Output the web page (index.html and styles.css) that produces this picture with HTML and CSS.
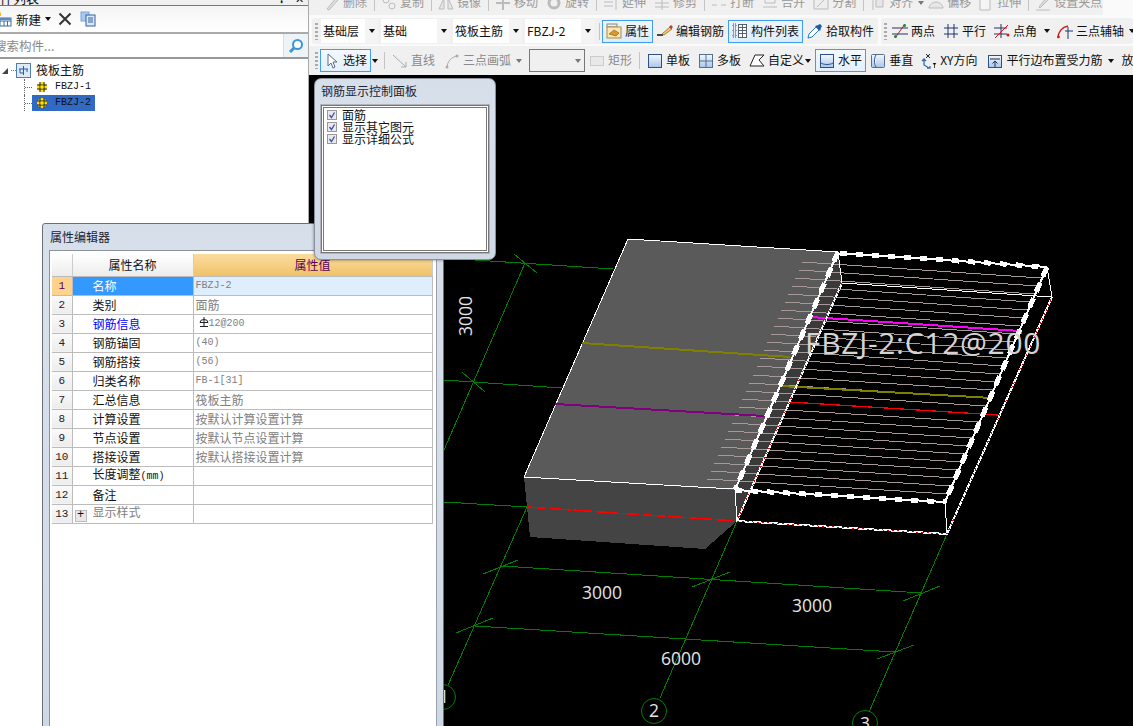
FILE: index.html
```html
<!DOCTYPE html>
<html lang="zh">
<head>
<meta charset="utf-8">
<title>钢筋显示控制面板</title>
<link rel="stylesheet" href="styles.css">
</head>
<body>
<div class="app">
  <aside class="side">
    <div class="side-title"><span class="side-title-text">构件列表</span><span class="side-title-btns"><span>✢</span><span>✕</span></span></div>
    <div class="side-tools">
      <svg class="ic-new" viewBox="0 0 16 16"><path d="M-2 1l2 2 2-2v4h-4z" fill="#f0c020"/><rect x="1" y="7" width="11" height="8" fill="#fff" stroke="#3a6ea5"/><path d="M1 10h11M5 10v5M8.500 10v5" stroke="#3a6ea5"/><rect x="1" y="7" width="11" height="2" fill="#5a8ac0"/></svg>
      <span class="side-new">新建</span><i class="caret caret-dark"></i>
      <svg class="ic-x" viewBox="0 0 14 14"><path d="M1.500 1.500l11 11M12.500 1.500l-11 11" stroke="#333" stroke-width="2"/></svg>
      <svg class="ic-copy" viewBox="0 0 16 16"><rect x="1" y="1" width="8" height="9" fill="#a8c8ee" stroke="#7fa6d6"/><rect x="6" y="4" width="9" height="11" fill="#dce9f8" stroke="#2f5f9f"/><path d="M8 7h5M8 9h5M8 11h5" stroke="#2f5f9f"/></svg>
    </div>
    <div class="side-search">
      <span class="search-text">搜索构件...</span>
      <span class="search-btn"><svg class="ic" viewBox="0 0 16 16"><circle cx="9.500" cy="6.500" r="4.500" fill="#fff" stroke="#3d95d8" stroke-width="2"/><path d="M6 10l-4 4" stroke="#3d95d8" stroke-width="3"/></svg></span>
    </div>
    <div class="tree">
      <div class="tree-root">
        <svg class="tree-exp" viewBox="0 0 8 8"><path d="M7 1v6H1z" fill="#444"/></svg>
        <i class="tree-dash"></i>
        <svg class="ic-root" viewBox="0 0 15 15"><rect x=".5" y=".5" width="14" height="14" fill="#dfe9f7" stroke="#4f7fb8"/><path d="M3 6h9M7.500 3v9M4 6v4h3M11 6v3" fill="none" stroke="#1d5fb0"/></svg>
        <span>筏板主筋</span>
      </div>
      <div class="tree-child"><span class="tree-node"><svg class="ic-gear" viewBox="0 0 12 12"><circle cx="6" cy="6" r="4.500" fill="#ffe000" stroke="#ffe000"/><path d="M1 4h10M1 8h10M4 1v10M8 1v10" stroke="#222"/><rect x="4.500" y="4.500" width="3" height="3" fill="#ffe000"/></svg><span class="mono">FBZJ-1</span></span></div>
      <div class="tree-child"><span class="tree-node is-selected"><svg class="ic-gear" viewBox="0 0 12 12"><circle cx="6" cy="6" r="4.500" fill="#ffe000" stroke="#ffe000"/><path d="M1 4h10M1 8h10M4 1v10M8 1v10" stroke="#222"/><rect x="4.500" y="4.500" width="3" height="3" fill="#ffe000"/></svg><span class="mono">FBZJ-2</span></span></div>
    </div>
  </aside>

  <main class="work">
    <div class="bar bar-clipped">
      <div class="bar-inner">
        <span class="tool off"><svg class="ic" viewBox="0 0 16 16"><path d="M3 14l9-11 2 2-9 10z" fill="#ddd" stroke="#bbb"/></svg>删除</span><i class="sep"></i>
        <span class="tool off"><svg class="ic" viewBox="0 0 16 16"><circle cx="5" cy="5" r="3" fill="none" stroke="#bbb"/><circle cx="11" cy="11" r="3" fill="none" stroke="#bbb"/></svg>复制</span><i class="sep"></i>
        <span class="tool off"><svg class="ic" viewBox="0 0 16 16"><path d="M1 14l5-11v11zM15 14l-5-11v11z" fill="#e6e6e6" stroke="#bbb"/></svg>镜像</span><i class="sep"></i>
        <span class="tool off"><svg class="ic" viewBox="0 0 16 16"><path d="M8 1v14M1 8h14" stroke="#bbb" stroke-width="2"/></svg>移动</span>
        <span class="tool off"><svg class="ic" viewBox="0 0 16 16"><circle cx="8" cy="8" r="5" fill="none" stroke="#bbb" stroke-width="3"/></svg>旋转</span><i class="sep"></i>
        <span class="tool off"><svg class="ic" viewBox="0 0 16 16"><path d="M1 3h9M1 7h9M1 11h9M13 1v14" stroke="#bbb"/></svg>延伸</span>
        <span class="tool off"><svg class="ic" viewBox="0 0 16 16"><path d="M1 4h14M1 8h14M1 12h14M8 1v14" stroke="#bbb"/></svg>修剪</span><i class="sep"></i>
        <span class="tool off"><svg class="ic" viewBox="0 0 16 16"><path d="M1 3h14M1 10h5M10 10h5" stroke="#bbb"/></svg>打断</span>
        <span class="tool off"><svg class="ic" viewBox="0 0 16 16"><path d="M3 3h10v5H3zM1 12h14" fill="none" stroke="#bbb"/></svg>合并</span>
        <span class="tool off"><svg class="ic" viewBox="0 0 16 16"><path d="M1 2h14v12H1zM4 12l8-8" fill="#eee" stroke="#bbb"/></svg>分割</span><i class="sep"></i>
        <span class="tool off"><svg class="ic" viewBox="0 0 16 16"><path d="M3 1v14M6 3h7v9H6z" fill="#e6e6e6" stroke="#bbb"/></svg>对齐</span><i class="caret caret-dim"></i>
        <span class="tool off"><svg class="ic" viewBox="0 0 16 16"><path d="M1 13c1-8 13-8 14 0z" fill="#e6e6e6" stroke="#bbb"/></svg>偏移</span>
        <span class="tool off tool-tight"><svg class="ic" viewBox="0 0 16 16"><path d="M2 1h10v14H2z" fill="#f4f4f4" stroke="#bbb"/></svg>拉伸</span><i class="sep"></i>
        <span class="tool off"><svg class="ic" viewBox="0 0 16 16"><path d="M4 12l8-10 2 2-9 9zM1 15h14" fill="#ddd" stroke="#bbb"/></svg>设置夹点</span>
      </div>
    </div>

    <div class="bar-gap"></div>

    <div class="bar-split">
      <div class="bar bar-mid">
        <i class="grip"></i>
        <span class="combo combo-a"><span class="combo-text">基础层</span><i class="combo-btn"><i class="caret caret-dark"></i></i></span>
        <span class="combo combo-b"><span class="combo-text">基础</span><i class="combo-btn"><i class="caret caret-dark"></i></i></span>
        <span class="combo combo-c"><span class="combo-text">筏板主筋</span><i class="combo-btn"><i class="caret caret-dark"></i></i></span>
        <span class="combo combo-c"><span class="combo-text">FBZJ-2</span><i class="combo-btn"><i class="caret caret-dark"></i></i></span>
        <i class="sep sep-mid"></i>
        <span class="tool on"><svg class="ic" viewBox="0 0 16 16"><rect x="1" y="1" width="10" height="3" fill="#eee" stroke="#888"/><rect x="1" y="4" width="14" height="11" fill="#fbe6b4" stroke="#b08a3c"/><path d="M3 11l5-4 5 3-3 3z" fill="#d89a2c" stroke="#7a5a20" stroke-width=".6"/></svg>属性</span>
        <span class="tool"><svg class="ic" viewBox="0 0 16 16"><path d="M0 12h6" stroke="#111" stroke-width="1.400"/><path d="M5 11l8-7 2 2-8 6z" fill="#f3cf60" stroke="#7a5a20" stroke-width=".7"/><path d="M12 4l2-2 2 2-2 2z" fill="#c0392b"/></svg>编辑钢筋</span>
        <span class="tool on"><svg class="ic" viewBox="0 0 16 16"><path d="M1 1h3v3H1zM1 6h3v3H1zM1 11h3v3H1z" fill="#dfe8f2" stroke="#444" stroke-dasharray="1 1"/><rect x="6.500" y="1.500" width="8" height="13" fill="#fff" stroke="#55606e"/><path d="M7 4.500h7M7 7.500h7M7 10.500h7M10.500 2v12" stroke="#55606e"/></svg>构件列表</span>
        <span class="tool"><svg class="ic" viewBox="0 0 16 16"><path d="M1 15l1-4 7-7 3 3-7 7z" fill="#fff" stroke="#2277cc"/><path d="M8 3l5 5 1-3 1-2-2-2-2 1z" fill="#1f5fa8"/></svg>拾取构件</span>
      </div>
      <div class="bar bar-mid bar-fill">
        <i class="grip grip-small"></i>
        <span class="tool"><svg class="ic" viewBox="0 0 16 16"><path d="M0 5h16M0 11h16" stroke="#23336e"/><path d="M3 15L13 1" stroke="#c01818"/><circle cx="3.500" cy="13.500" r="1.500" fill="#2a8a2a"/><circle cx="12.500" cy="2.500" r="1.500" fill="#2a8a2a"/></svg>两点</span>
        <span class="tool"><svg class="ic" viewBox="0 0 16 16"><path d="M1 5h14M1 11h14M5 1v14M11 1v14" stroke="#23336e"/></svg>平行</span>
        <span class="tool"><svg class="ic" viewBox="0 0 16 16"><path d="M0 5h13M0 11h13M7 1v14" stroke="#23336e"/><path d="M1 15L14 2" stroke="#d01818"/><circle cx="14" cy="12" r="1.500" fill="#d01818"/></svg>点角</span><i class="caret caret-dark caret-wide"></i>
        <span class="tool"><svg class="ic" viewBox="0 0 16 16"><path d="M1 15c0-6 4-11 10-12" fill="none" stroke="#d01818" stroke-width="1.400"/><path d="M8 8h8M11 4v12" stroke="#23336e"/><circle cx="1.500" cy="14" r="1.300" fill="#d01818"/></svg>三点辅轴</span><i class="caret caret-dark"></i>
      </div>
    </div>

    <div class="bar-gap bar-gap-small"></div>

    <div class="bar bar-low">
      <i class="grip"></i>
      <span class="tool on on-flat"><svg class="ic" viewBox="0 0 16 16"><path d="M4 1v12l3-3 2 5 2-1-2-5h4z" fill="#fff" stroke="#5a6a88"/></svg>选择</span><i class="caret caret-dark"></i>
      <i class="sep sep-low"></i>
      <span class="tool off2"><svg class="ic" viewBox="0 0 16 16"><path d="M1 2l13 12M14 9v5H9" fill="none" stroke="#aaa"/></svg>直线</span>
      <span class="tool off2 tool-arc"><svg class="ic" viewBox="0 0 16 16"><path d="M3 15c0-6 4-11 10-12" fill="none" stroke="#aaa"/><circle cx="3" cy="14" r="1.500" fill="#aaa"/><circle cx="13" cy="3" r="1.500" fill="#aaa"/></svg>三点画弧</span><i class="caret caret-dim"></i>
      <span class="select-box"><i class="caret caret-dim"></i></span>
      <span class="tool off2"><svg class="ic" viewBox="0 0 16 16"><rect x="1.500" y="3.500" width="13" height="9" fill="#e8e8e8" stroke="#ccc"/></svg>矩形</span>
      <i class="sep sep-low2"></i>
      <span class="tool"><svg class="ic" viewBox="0 0 16 16"><rect x="1.500" y="1.500" width="13" height="13" fill="url(#blue)" stroke="#2d4f8a"/></svg>单板</span>
      <span class="tool"><svg class="ic" viewBox="0 0 16 16"><rect x="1.500" y="1.500" width="13" height="13" fill="url(#blue)" stroke="#55708f"/><path d="M8 2v12M2 8h12" stroke="#55708f"/></svg>多板</span>
      <span class="tool"><svg class="ic" viewBox="0 0 16 16"><path d="M1 13L6 2h9l-5 5 5 6z" fill="#fff" stroke="#222"/></svg>自定义</span><i class="caret caret-dark caret-back"></i>
      <span class="tool on on-flat tool-gap"><svg class="ic" viewBox="0 0 16 16"><rect x="1.500" y="1.500" width="13" height="13" fill="url(#blue)" stroke="#2d4f8a"/><path d="M2 10c3 2 9 2 12 0" fill="none" stroke="#2d4f8a"/></svg>水平</span>
      <span class="tool"><svg class="ic" viewBox="0 0 16 16"><rect x="1.500" y="1.500" width="13" height="13" rx="1" fill="url(#blue)" stroke="#55708f"/><path d="M6 2c-2 3-2 9 0 12" fill="#fff" stroke="#2d4f8a"/></svg>垂直</span>
      <span class="tool"><svg class="ic" viewBox="0 0 16 16"><path d="M5 1l4 4M9 1L5 5" stroke="#222"/><path d="M3 6v6l5 3M1 8l2-2 2 2M6 15h3v-2" fill="none" stroke="#2d6fb0" stroke-width="1.300"/><path d="M12 10l1.500 2 1.500-2M13.500 12v3" stroke="#222" stroke-width=".8"/></svg>XY方向</span>
      <span class="tool tool-edge"><svg class="ic" viewBox="0 0 16 16"><rect x="1.500" y="2.500" width="13" height="12" fill="url(#blue)" stroke="#2d4f8a"/><path d="M3 6h10M8 14V8M5.500 10.500L8 8l2.500 2.500" fill="none" stroke="#1a2a50"/></svg>平行边布置受力筋</span><i class="caret caret-dark caret-wide2"></i>
      <span class="tool tool-last">放射筋</span>
    </div>

    <svg class="scene" viewBox="309 75 824 651" role="img" aria-label="筏板钢筋三维视图">
      <defs>
        <linearGradient id="blue" x1="0" y1="0" x2="0" y2="1"><stop offset="0" stop-color="#f4f8fd"/><stop offset="1" stop-color="#a9c6ea"/></linearGradient>
      </defs>
      <g class="axis">
        <path d="M444 258L613 269M444 380L562 388M444 502L527 507"/>
        <path d="M444 450L525 263M448 685L527 507M660 698L737 521M869 712L947 534"/>
        <path d="M502 566L922 593M475 626L895 652"/>
        <path d="M462 372L485 392M514 254L537 273M483 574L518 560M692 587L730 572M903 601L940 586M456 633L493 618M877 659L914 645"/>
        <circle cx="443" cy="697" r="12.500"/><circle cx="654" cy="711" r="12.500"/><circle cx="865" cy="723" r="12.500"/>
      </g>
      <polygon points="628,239 838,252 735,490 524,477" fill="#5a5a5a"/>
      <polygon points="838,252 842,283 737,521 735,490" fill="#3a3a3a"/>
      <polygon points="524,477 735,490 737,521 705,549 530,537" fill="#444"/>
      <path class="tan" d="M707 479L948 494M711 471L951 486M714 463L955 478M718 455L958 470M721 447L962 462M725 439L965 454M728 431L969 446M732 423L972 438M735 415L976 430M739 407L979 422M742 399L983 414M746 391L986 406M749 383L990 398M753 375L993 390M757 366L996 382M760 358L1000 374M764 350L1003 366M767 342L1007 358M771 334L1010 350M774 326L1014 342M778 318L1017 334M781 310L1020 326M785 302L1024 318M788 294L1027 310M792 286L1031 302M795 278L1034 294M799 270L1038 286M802 262L1041 278"/>
      <path d="M628 239L838 252M628 239L524 477L733 489" class="white1"/>
      <path d="M527 507L737 521" class="red2"/>
      <path d="M582 343L790 357" class="olive"/>
      <path d="M780 386L992 398" class="olive"/>
      <path d="M555 404L765 416" class="purple"/>
      <path d="M809 321L810 317L1020 331L1021 334" class="magenta"/>
      <path d="M790 402L982 414L998 415" class="red1"/>
      <path d="M842 283L1052 297M1047 267L1052 297M838 252L842 283M735 490L737 521M945 502L947 534" class="white1"/>
      <path d="M842 283L737 521L947 534L1052 297" class="white2"/>
      <path d="M842 283L737 521L947 534L1052 297" class="reddots"/>
      <path d="M840 253L1047 267M735 490L945 502M838 252L735 490M1047 267L945 502" class="white2"/>
      <path d="M840 253L1047 267M735 490L945 502" class="blobs"/>
      <path d="M838 252L735 490M1047 267L945 502" class="blobs blobs-long"/>
      <text class="tag" x="805" y="354">FBZJ-2:C12@200</text>
      <text class="dim" x="582" y="599">3000</text>
      <text class="dim" x="792" y="612">3000</text>
      <text class="dim" x="661" y="665">6000</text>
      <text class="dim dim-v" transform="translate(472 336) rotate(-90)">3000</text>
      <text class="dim" x="439" y="703">1</text>
      <text class="dim" x="649" y="717">2</text>
      <text class="dim" x="860" y="730">3</text>
    </svg>
  </main>

  <section class="win prop-win">
    <div class="win-title">属性编辑器</div>
    <div class="win-body">
      <table class="grid">
        <colgroup><col class="c-num"><col class="c-name"><col class="c-val"></colgroup>
        <thead><tr class="tr-head"><th></th><th class="th-name">属性名称</th><th class="th-val">属性值</th></tr></thead>
        <tbody>
          <tr class="row-active"><td class="num">1</td><td class="name">名称</td><td class="val mono">FBZJ-2</td></tr>
          <tr><td class="num">2</td><td class="name">类别</td><td class="val">面筋</td></tr>
          <tr><td class="num">3</td><td class="name name-link">钢筋信息</td><td class="val mono"><svg class="rebar" viewBox="0 0 10 10"><path d="M1 5.500a4 3 0 0 1 8 0zM5 0v9M1 9.500h8" fill="none" stroke="#222"/></svg>12@200</td></tr>
          <tr><td class="num">4</td><td class="name">钢筋锚固</td><td class="val mono">(40)</td></tr>
          <tr><td class="num">5</td><td class="name">钢筋搭接</td><td class="val mono">(56)</td></tr>
          <tr><td class="num">6</td><td class="name">归类名称</td><td class="val mono">FB-1[31]</td></tr>
          <tr><td class="num">7</td><td class="name">汇总信息</td><td class="val">筏板主筋</td></tr>
          <tr><td class="num">8</td><td class="name">计算设置</td><td class="val">按默认计算设置计算</td></tr>
          <tr><td class="num">9</td><td class="name">节点设置</td><td class="val">按默认节点设置计算</td></tr>
          <tr><td class="num">10</td><td class="name">搭接设置</td><td class="val">按默认搭接设置计算</td></tr>
          <tr><td class="num">11</td><td class="name">长度调整<span class="mono">(mm)</span></td><td class="val"></td></tr>
          <tr><td class="num">12</td><td class="name">备注</td><td class="val"></td></tr>
          <tr><td class="num">13</td><td class="name name-group"><span class="plus">+</span>显示样式</td><td class="val"></td></tr>
        </tbody>
      </table>
    </div>
  </section>

  <section class="win rebar-win">
    <div class="win-title">钢筋显示控制面板</div>
    <div class="check-box">
      <div class="check-row"><svg class="check" viewBox="0 0 10 10"><rect x=".5" y=".5" width="9" height="9" fill="#e8e8ee" stroke="#999"/><path d="M2.500 5l2 2.500 3-5" fill="none" stroke="#3a55a0" stroke-width="1.300"/></svg>面筋</div>
      <div class="check-row"><svg class="check" viewBox="0 0 10 10"><rect x=".5" y=".5" width="9" height="9" fill="#e8e8ee" stroke="#999"/><path d="M2.500 5l2 2.500 3-5" fill="none" stroke="#3a55a0" stroke-width="1.300"/></svg>显示其它图元</div>
      <div class="check-row"><svg class="check" viewBox="0 0 10 10"><rect x=".5" y=".5" width="9" height="9" fill="#e8e8ee" stroke="#999"/><path d="M2.500 5l2 2.500 3-5" fill="none" stroke="#3a55a0" stroke-width="1.300"/></svg>显示详细公式</div>
    </div>
  </section>
</div>
</body>
</html>
```

FILE: styles.css
```css
* { box-sizing: border-box; }
html, body { margin: 0; height: 100%; overflow: hidden; background: #fff; }
body { font: 12px/1.2 "Noto Sans CJK SC", "Liberation Sans", sans-serif; color: #111; }

.app { position: relative; display: grid; grid-template-columns: 309px 824px; width: 1133px; height: 726px; overflow: hidden; }

/* left list */
.side { display: flex; flex-direction: column; background: #fff; border-right: 1px solid #aaa; height: 726px; }
.side-title { display: flex; justify-content: space-between; height: 6px; overflow: hidden; background: #f0f0f0; border-bottom: 1px solid #777; }
.side-title-text { margin: -10px 0 0 -13px; font-size: 13px; line-height: 16px; }
.side-title-btns { display: flex; gap: 9px; margin: -10px 0 0; padding-right: 4px; font-size: 11px; line-height: 16px; }
.side-tools { display: flex; align-items: center; height: 28px; background: linear-gradient(#f4f4f4, #fff); border-bottom: 2px solid #aaa; }
.ic-new { width: 16px; height: 16px; margin: 0 0 0 -1px; flex: none; overflow: visible; }
.side-new { margin-left: 1px; font-size: 12.500px; }
.side-tools .caret { margin: 0 0 0 4px; }
.ic-x { width: 14px; height: 14px; margin-left: 7px; }
.ic-copy { width: 16px; height: 16px; margin-left: 8px; }
.side-search { display: flex; align-items: center; height: 25px; background: #fff; border-bottom: 2px solid #999; overflow: hidden; }
.search-text { flex: 1; margin-left: -6px; color: #888; font-size: 12.500px; white-space: nowrap; }
.search-btn { display: flex; align-items: center; justify-content: center; width: 25px; height: 25px; background: #eef3f8; border-left: 1px solid #ddd; }
.tree { padding-top: 3px; font-size: 12px; }
.tree-root { display: flex; align-items: center; height: 17px; }
.tree-exp { width: 8px; height: 8px; margin-left: 1px; }
.tree-dash { width: 5px; margin: 0 0 0 2px; border-top: 1px dotted #777; }
.ic-root { width: 15px; height: 15px; margin-right: 5px; flex: none; }
.tree-child { display: flex; align-items: center; height: 16px; margin-left: 24px; border-left: 1px dotted #666; }
.tree-child::before { content: ""; width: 7px; border-top: 1px dotted #666; }
.tree-node { display: flex; align-items: center; gap: 7px; height: 16px; padding: 0 4px; }
.is-selected { background: #316ac5; }
.ic-gear { width: 12px; height: 12px; flex: none; }
.mono { font-family: "Liberation Mono", "Noto Sans CJK SC", monospace; font-size: 10px; }

/* toolbars */
.work { display: flex; flex-direction: column; height: 726px; background: #fafafa; min-width: 0; }
.bar { display: flex; align-items: center; flex: none; background: #f0f0f0; overflow: hidden; white-space: nowrap; }
.bar-clipped { height: 15px; width: 794px; padding-left: 11px; align-items: flex-start; }
.bar-inner { display: flex; align-items: center; margin-top: -9px; }
.bar-gap { height: 3px; flex: none; }
.bar-gap-small { height: 2px; }
.bar-split { display: flex; gap: 3px; height: 26px; flex: none; padding-left: 3px; }
.bar-mid { height: 26px; border-radius: 3px; padding-right: 0; }
.bar-fill { flex: 1; }
.bar-low { height: 29px; padding-left: 3px; }
.grip { flex: none; width: 3px; height: 17px; margin: 0 3px 0 3px; background: repeating-linear-gradient(#aaa 0 2px, transparent 2px 4px); }
.bar-low .grip { margin-right: 2px; }
.grip-small { margin: 0 1px 0 3px; }
.tool { display: flex; align-items: center; flex: none; gap: 3px; height: 23px; padding: 0 4px; color: #111; }
.ic { width: 16px; height: 16px; flex: none; }
.off { color: #999; }
.off2 { color: #8a8a8a; }
.on { box-shadow: inset 0 0 0 1px #3f9cf0; background: linear-gradient(#eef6fe, #dcecfb); }
.on-flat { background: linear-gradient(#f4f9fe, #e2effb); }
.tool-tight { margin-left: -1px; }
.tool-gap { margin-left: 4px; }
.tool-arc { margin-left: 1px; }
.tool-edge { margin-left: 2px; }
.tool-last { margin-left: 2px; padding-left: 4px; }
.sep { flex: none; width: 1px; height: 17px; margin: 0 2px 0 3px; background: #c4c4c4; }
.sep-mid { margin: 0 2px 0 2px; }
.sep-low { margin: 0 3px 0 6px; }
.sep-low2 { margin: 0 3px 0 3px; }
.caret { display: inline-block; flex: none; width: 0; height: 0; border: 3.500px solid transparent; border-top: 4px solid #111; border-bottom: 0; }
.caret-dark { border-top-color: #111; }
.caret-dim { border-top-color: #777; margin: 0 .5px; }
.bar-mid > .caret, .bar-low > .caret { margin: 0 .5px; }
.bar-low > .caret-back { margin: 0 0 0 -3px; }
.bar-mid > .caret-wide { margin: 0 3px 0 3px; }
.bar-low > .caret-wide2 { margin: 0 1.500px; }
.combo { display: flex; align-items: center; flex: none; height: 24px; margin-right: 3px; background: #fff; }
.combo-a { width: 57px; }
.combo-b { width: 69px; }
.combo-c { width: 69px; }
.combo-text { flex: 1; padding-left: 2px; }
.combo-btn { display: flex; align-items: center; justify-content: center; width: 13px; height: 24px; background: #f4f4f4; }
.select-box { display: flex; align-items: center; justify-content: flex-end; flex: none; width: 56px; height: 23px; margin-left: 7px; padding-right: 3px; background: #f0f0f0; border: 1px solid #777; }

/* 3d scene */
.scene { display: block; flex: none; width: 824px; height: 651px; background: #000; shape-rendering: crispEdges; }
.axis path, .axis circle { fill: none; stroke: #008000; stroke-width: 1; }
.axis circle { shape-rendering: auto; }
.tan { fill: none; stroke: #a89898; stroke-width: 1; }
.white1 { fill: none; stroke: #fff; stroke-width: 1; }
.white2 { fill: none; stroke: #fff; stroke-width: 2; }
.reddots { fill: none; stroke: #e00000; stroke-width: 1; stroke-dasharray: 2 3; }
.red1 { fill: none; stroke: #f00; stroke-width: 1.200; }
.red2 { fill: none; stroke: #f00; stroke-width: 1.500; stroke-dasharray: 18 4 22 3; }
.olive { fill: none; stroke: #808000; stroke-width: 2; }
.purple { fill: none; stroke: #800080; stroke-width: 2; }
.magenta { fill: none; stroke: #f0f; stroke-width: 2; }
.blobs { fill: none; stroke: #fff; stroke-width: 5; stroke-dasharray: 7 9; }
.blobs-long { stroke-dasharray: 10 7; }
.tag { font: 30px "Open Sans", "Liberation Sans", sans-serif; fill: #d4d4d4; letter-spacing: .7px; shape-rendering: auto; }
.dim { font: 17.500px "Open Sans", "Liberation Sans", sans-serif; fill: #e4e4e4; }

/* floating windows */
.win { position: absolute; background: linear-gradient(#d6deea, #d8e0ec 40px, #cfd9e6); border: 1px solid #6a6f78; }
.win-title { height: 26px; padding: 5px 0 0 7px; color: #1c2430; font-size: 12px; line-height: 16px; }
.prop-win { left: 42px; top: 223px; width: 402px; height: 520px; padding: 0 6px; border-radius: 3px 3px 0 0; }
.prop-win .win-title { padding-left: 1px; }
.win-body { height: 100%; padding: 3px 2px; background: #fff; border: 1px solid #8c919a; border-right-color: #9aa0a8; }
.grid { width: 380px; table-layout: fixed; border-collapse: collapse; font-size: 12px; }
.c-num { width: 20px; }
.c-name { width: 121px; }
.c-val { width: 239px; }
.grid tr { height: 19px; }
.grid .tr-head { height: 22px; }
.grid th, .grid td { padding: 0; border: 1px solid #bcbcbc; border-top: 0; border-left: 0; overflow: hidden; white-space: nowrap; line-height: 14px; vertical-align: middle; }
.grid th { font-weight: 400; background: linear-gradient(#fff, #ececec); border-right-color: #ccc; }
.grid .th-val { background: linear-gradient(#fbdca0, #f0c268); color: #5a005a; }
.num { text-align: center; font: 11px/14px "Liberation Mono", monospace; background: linear-gradient(#fafafa, #ececec); color: #222; }
.name { padding-left: 20px !important; }
.name-link { color: #00f; }
.name-group { padding-left: 2px !important; color: #808080; }
.val { padding-left: 2px !important; color: #808080; }
.row-active .num { background: #fdd28c; color: #5a005a; }
.row-active .name { background: #39f; color: #fff; }
.row-active .val { background: #dfeefd; }
.rebar { width: 10px; height: 10px; margin: 0 0 -1px 3px; vertical-align: baseline; }
.plus { display: inline-block; width: 12px; height: 12px; margin-right: 6px; background: #e8e8e8; border: 1px solid #bbb; color: #111; font: 12px/9px "Liberation Mono", monospace; text-align: center; vertical-align: -1px; }

.rebar-win { left: 314px; top: 78px; width: 182px; height: 182px; padding: 0 6px; border-radius: 7px; border-color: #8a8f98; box-shadow: 0 0 3px rgba(0,0,0,.5); }
.rebar-win .win-title { padding: 4px 0 0 0; }
.check-box { height: 148px; padding: 1px 0 0 3px; background: #fff; border: 3px double #777; outline: 1px solid #b0b4ba; font-size: 12px; }
.check-row { display: flex; align-items: center; gap: 5px; height: 12px; line-height: 12px; white-space: nowrap; }
.check { width: 10px; height: 10px; flex: none; }
```
